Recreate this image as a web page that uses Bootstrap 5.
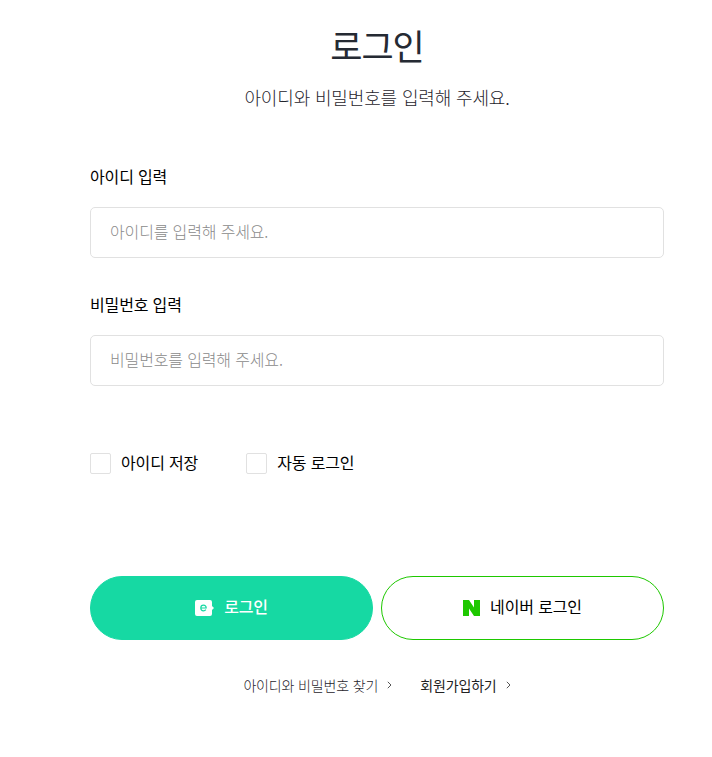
<!DOCTYPE html>
<html lang="ko">
<head>
  <meta charset="UTF-8">
  <meta name="viewport" content="width=device-width, initial-scale=1.0">
  <title>로그인</title>
  <link href="https://cdn.jsdelivr.net/npm/bootstrap@5.3.0/dist/css/bootstrap.min.css" rel="stylesheet">
  <style>
    body {
      font-family: "Noto Sans CJK KR", "Noto Sans", sans-serif;
      background: #fff;
      letter-spacing: -0.15px;
    }
    .login-wrap {
      padding: 18px 48px 0 90px;
    }
    .login-title {
      font-size: 35px;
      line-height: 54px;
      font-weight: 400;
      letter-spacing: -1px;
      color: #252a33;
      margin-bottom: 10px;
    }
    .login-desc {
      font-size: 18px;
      line-height: 30px;
      font-weight: 300;
      color: #1f242c;
      margin-bottom: 53px;
    }
    .field-label {
      display: block;
      font-size: 16px;
      line-height: 24px;
      font-weight: 400;
      color: #000;
      margin-top: -1px;
      margin-bottom: 19px;
    }
    .login-input {
      height: 51px;
      border: 1px solid #e1e1e1;
      border-radius: 5px;
      padding: 0 19px 3px;
      font-size: 16px;
      font-weight: 300;
      letter-spacing: -0.15px;
      margin-bottom: 35px;
    }
    .login-input::placeholder {
      color: #8a8a8a;
    }
    .check-row {
      margin-top: 67px;
      gap: 48px;
      margin-bottom: 102px;
    }
    .check-item {
      gap: 10px;
      font-size: 16px;
      line-height: 24px;
      color: #000;
    }
    .check-item span {
      margin-top: -3px;
    }
    .check-box[type=checkbox] {
      width: 21px;
      height: 21px;
      margin: 0;
      border: 1px solid #e1e1e1;
      border-radius: 2px;
    }
    .btn-row {
      gap: 8px;
    }
    .login-btn {
      flex: 1 1 0;
      height: 64px;
      border-radius: 32px;
      gap: 10px;
      font-size: 16px;
      letter-spacing: -0.15px;
    }
    .login-btn span {
      margin-top: -4px;
    }
    .btn-email {
      background: #16d9a3;
      border: 1px solid #16d9a3;
      color: #fff;
      font-weight: 500;
    }
    .btn-naver {
      background: #fff;
      border: 1px solid #1ec800;
      color: #000;
      font-weight: 400;
    }
    .foot-links {
      margin-top: 33px;
      gap: 28px;
      font-size: 14px;
      line-height: 24px;
      font-weight: 300;
    }
    .foot-links a {
      color: #1f242c;
      text-decoration: none;
      display: flex;
      align-items: center;
      gap: 9px;
    }
    .foot-links a.join-link {
      font-weight: 400;
      color: #222;
    }
  </style>
</head>
<body>
  <div class="login-wrap">
    <div class="text-center">
      <h1 class="login-title">로그인</h1>
      <p class="login-desc">아이디와 비밀번호를 입력해 주세요.</p>
    </div>

    <form>
      <label class="field-label" for="user-id">아이디 입력</label>
      <input type="text" id="user-id" class="form-control login-input" placeholder="아이디를 입력해 주세요.">

      <label class="field-label" for="user-pw">비밀번호 입력</label>
      <input type="password" id="user-pw" class="form-control login-input" placeholder="비밀번호를 입력해 주세요.">

      <div class="d-flex check-row">
        <label class="d-flex align-items-center check-item">
          <input type="checkbox" class="form-check-input check-box"><span>아이디 저장</span>
        </label>
        <label class="d-flex align-items-center check-item">
          <input type="checkbox" class="form-check-input check-box"><span>자동 로그인</span>
        </label>
      </div>

      <div class="d-flex btn-row">
        <button type="button" class="btn d-flex align-items-center justify-content-center login-btn btn-email">
          <svg width="19" height="16" viewBox="0 0 19 16">
            <path d="M2 0h13a2 2 0 0 1 2 2v4l2 2-2 2v4a2 2 0 0 1-2 2H2a2 2 0 0 1-2-2V2a2 2 0 0 1 2-2z" fill="#fff"/>
            <path d="M5.8 8h5.4c0-1.700-1.100-2.800-2.700-2.800S5.800 6.300 5.800 8s1.100 2.800 2.700 2.800c1 0 1.800-.4 2.300-1.100" fill="none" stroke="#16d9a3" stroke-width="1.200"/>
          </svg>
          <span>로그인</span>
        </button>
        <button type="button" class="btn d-flex align-items-center justify-content-center login-btn btn-naver">
          <svg width="17" height="16" viewBox="0 0 17 16">
            <path d="M0 0h6l5 7.500V0h6v16h-6L6 8.500V16H0z" fill="#1ec800"/>
          </svg>
          <span>네이버 로그인</span>
        </button>
      </div>
    </form>

    <div class="d-flex justify-content-center foot-links">
      <a href="#">아이디와 비밀번호 찾기
        <svg width="5" height="8" viewBox="0 0 5 8"><path d="M.8.8 4 4 .8 7.200" fill="none" stroke="#555" stroke-width="1"/></svg>
      </a>
      <a href="#" class="join-link">회원가입하기
        <svg width="5" height="8" viewBox="0 0 5 8"><path d="M.8.8 4 4 .8 7.200" fill="none" stroke="#555" stroke-width="1"/></svg>
      </a>
    </div>
  </div>

  <script src="https://cdn.jsdelivr.net/npm/bootstrap@5.3.0/dist/js/bootstrap.bundle.min.js"></script>
</body>
</html>
